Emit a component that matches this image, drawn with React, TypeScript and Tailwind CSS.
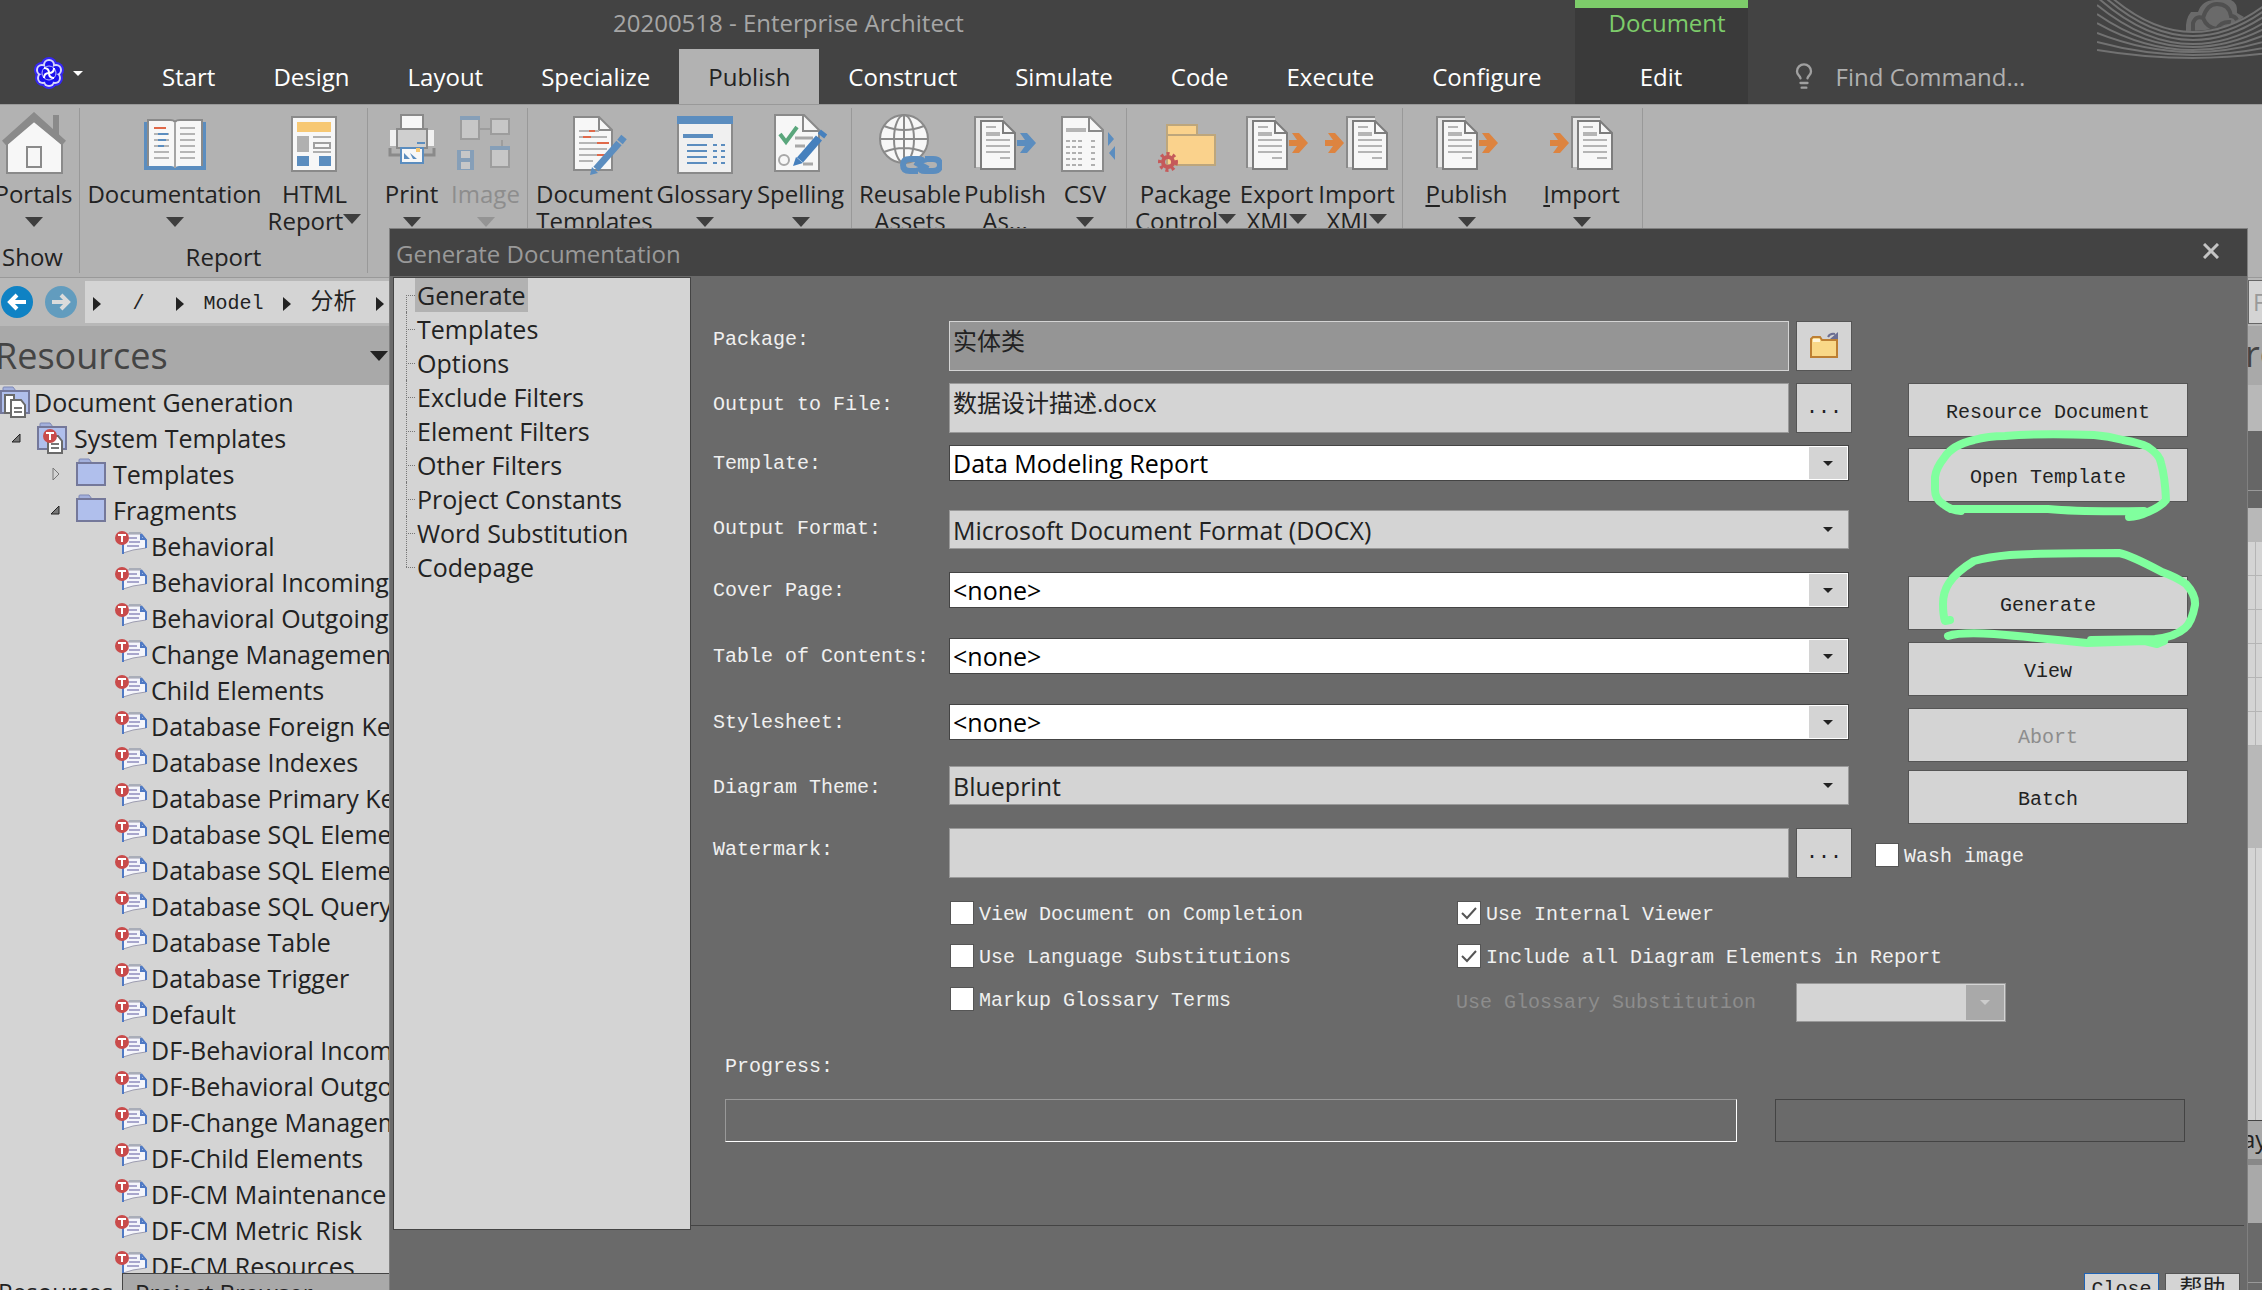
import type { FC, ReactNode } from "react";
import { Lightbulb } from "lucide-react";

const tabs = [
  "Start",
  "Design",
  "Layout",
  "Specialize",
  "Publish",
  "Construct",
  "Simulate",
  "Code",
  "Execute",
  "Configure",
];

const fragments = [
  "Behavioral",
  "Behavioral Incoming",
  "Behavioral Outgoing",
  "Change Management",
  "Child Elements",
  "Database Foreign Key",
  "Database Indexes",
  "Database Primary Key",
  "Database SQL Elements",
  "Database SQL Elements",
  "Database SQL Query",
  "Database Table",
  "Database Trigger",
  "Default",
  "DF-Behavioral Incoming",
  "DF-Behavioral Outgoing",
  "DF-Change Management",
  "DF-Child Elements",
  "DF-CM Maintenance",
  "DF-CM Metric Risk",
  "DF-CM Resources",
];

const pages = [
  "Generate",
  "Templates",
  "Options",
  "Exclude Filters",
  "Element Filters",
  "Other Filters",
  "Project Constants",
  "Word Substitution",
  "Codepage",
];

const Caret: FC<{ className?: string }> = ({ className = "" }) => (
  <svg
    viewBox="0 0 18 10"
    className={`h-[10px] w-[18px] shrink-0 fill-current ${className}`}
    aria-hidden
  >
    <path d="M0 0h18l-9 10z" />
  </svg>
);

/* ---------- ribbon icons, all on a 64x64 grid ---------- */

const Icon: FC<{ children: ReactNode; className?: string }> = ({
  children,
  className = "",
}) => (
  <svg viewBox="0 0 64 64" className={`h-16 w-16 ${className}`} fill="none" aria-hidden>
    {children}
  </svg>
);

const HouseIcon = () => (
  <Icon>
    <path d="M51 3h6v22l-6-6z" fill="#8a8a8a" />
    <path d="M5 32 32 9l28 23v29H5z" fill="#f7f7f7" stroke="#8a8a8a" strokeWidth="2" />
    <path d="M2 31 32 4l30 27" stroke="#8a8a8a" strokeWidth="6" />
    <path d="M25 35h14v20H25z" fill="#f7f7f7" stroke="#8a8a8a" strokeWidth="2" />
  </Icon>
);

const BookIcon = () => (
  <Icon>
    <path d="M1 10h62v48H1z" fill="#5b8dbf" />
    <path d="M5 8h22q4 0 5 3 1-3 5-3h22v46H36q-3 0-4 2-1-2-4-2H5z" fill="#f7f7f7" />
    <path d="M5 54V8h22q4 0 5 2 1-2 5-2h22v46" stroke="#8a8a8a" strokeWidth="2" />
    <path d="M32 10v46" stroke="#a5a5a5" strokeWidth="2" />
    <path
      d="M11 22h15M11 28h15M11 34h15M11 40h15M11 46h15M37 16h15M37 22h15M37 28h15M37 34h15M37 40h15M37 46h15"
      stroke="#b5b5b5"
      strokeWidth="2"
    />
    <path d="M11 16h12" stroke="#e0694a" strokeWidth="2" />
    <path d="M15 22h10M15 28h8M15 34h6" stroke="#5b8dbf" strokeWidth="2" />
  </Icon>
);

const HtmlIcon = () => (
  <Icon>
    <path d="M9 5h44v54H9z" fill="#f7f7f7" stroke="#8a8a8a" strokeWidth="2" />
    <path d="M14 10h34v10H14z" fill="#f7c873" />
    <path d="M14 24h12v16H14z" fill="#b0b0b0" />
    <path d="M30 25h18M30 40h18" stroke="#b0b0b0" strokeWidth="2" />
    <path d="M31 31h16v5H31z" stroke="#a0a0a0" strokeWidth="2" />
    <path d="M14 44h12v10H14zM36 44h12v10H36z" fill="#5b8dbf" />
  </Icon>
);

const PrinterIcon = () => (
  <Icon>
    <path d="M10 18h44v16H10z" fill="#f0f0f0" />
    <path d="M10 36v7h44v-7" stroke="#8a8a8a" strokeWidth="3" />
    <path d="M21 3h22v14H21z" fill="#f7f7f7" stroke="#8a8a8a" strokeWidth="2" />
    <path d="M17 17h30v19H17z" fill="#cfcfcf" stroke="#8a8a8a" strokeWidth="2" />
    <path d="M37 31h8" stroke="#5b8dbf" strokeWidth="2" />
    <path d="M21 36h22v15H21z" fill="#f7f7f7" stroke="#5b8dbf" strokeWidth="2" />
    <path d="M24 47v-6l6 6zM30 41l7 6h-4zM36 43l6 6" fill="#5b8dbf" />
    <path d="M36 36h4v4h-4z" fill="#f7c873" />
  </Icon>
);

const ImageIcon = () => (
  <Icon className="opacity-50">
    <path d="M26 17h10M48 28v8" stroke="#8a8a8a" strokeWidth="2" />
    <path d="M7 5h18v22H7zM37 7h18v15H37zM37 36h18v19H37z" fill="#dcdcdc" stroke="#8a8a8a" strokeWidth="2" />
    <path d="M6 4h20v4H6zM36 34h20v4H36zM3 38h17v20H3z" fill="#5b8dbf" />
    <path d="M7 39h9v7H7zM7 50h9v7H7z" fill="#dcdcdc" />
  </Icon>
);

const DocTemplateIcon = () => (
  <Icon>
    <path d="M11 5h25l13 13v40H11z" fill="#f7f7f7" stroke="#8a8a8a" strokeWidth="2" />
    <path d="M36 5v13h13" stroke="#8a8a8a" strokeWidth="2" />
    <path d="M16 19h20M16 25h28M16 31h28M16 37h28M16 43h28M16 49h14" stroke="#b5b5b5" strokeWidth="2" />
    <path d="M26 19h6M20 25h8M34 31h12M34 43h8" stroke="#e0694a" strokeWidth="2" />
    <path d="M56 31 33 57" stroke="#5b8dbf" strokeWidth="7" />
    <path d="m27 63 2-8 6 6z" fill="#5b8dbf" />
    <path d="m57 30 4-5" stroke="#5b8dbf" strokeWidth="7" />
  </Icon>
);

const GlossaryIcon = () => (
  <Icon>
    <path d="M5 5h54v56H5z" fill="#f0f0f0" stroke="#8a8a8a" strokeWidth="2" />
    <path d="M4 4h56v8H4z" fill="#5b8dbf" />
    <path d="M10 24h30" stroke="#5b8dbf" strokeWidth="4" />
    <path d="M14 33h20M14 39h20M14 45h20M14 51h20" stroke="#5b8dbf" strokeWidth="2" />
    <path d="M40 33h12M40 39h12M40 45h12M40 51h12" stroke="#5b8dbf" strokeWidth="2" strokeDasharray="4" />
  </Icon>
);

const SpellingIcon = () => (
  <Icon>
    <path d="M6 3h29l15 15v41H6z" fill="#f7f7f7" stroke="#8a8a8a" strokeWidth="2" />
    <path d="M34 3v16h16" stroke="#8a8a8a" strokeWidth="2" />
    <path d="m11 22 6 8 11-15" stroke="#5aa67c" strokeWidth="4" />
    <circle cx="15" cy="48" r="5" stroke="#a8a8a8" strokeWidth="2" />
    <path d="M26 26h18M26 34h10M34 52h10" stroke="#a8a8a8" strokeWidth="3" />
    <path d="M50 26 31 48" stroke="#4680bd" strokeWidth="8" />
    <path d="m24 54 3-9 7 6zM49 22l7 6" fill="#4680bd" />
    <path d="m52 24 3-4" stroke="#4680bd" strokeWidth="8" />
  </Icon>
);

const GlobeIcon = () => (
  <Icon>
    <circle cx="26" cy="27" r="24" fill="#f7f7f7" stroke="#8a8a8a" strokeWidth="2" />
    <ellipse cx="26" cy="27" rx="10" ry="24" stroke="#8a8a8a" strokeWidth="2" />
    <path d="M2 27h48M6 14q20 8 40 0M6 40q20-8 40 0M26 3v48" stroke="#8a8a8a" strokeWidth="2" />
    <path
      d="M40 59h-8q-7 0-7-6t7-6h8q5 0 6 4M47 47h8q7 0 7 6t-7 6h-8q-5 0-6-4M37 50l13 7"
      stroke="#5b8dbf"
      strokeWidth="6"
    />
  </Icon>
);

const Pages: FC<{ x: number }> = ({ x }) => (
  <g transform={`translate(${x} 0)`}>
    <path d="M1 5h28v50H1z" fill="#e6e6e6" />
    <path d="M1 56V5h28" stroke="#8a8a8a" strokeWidth="2" />
    <path d="M7 9h22l12 12v36H7z" fill="#f7f7f7" stroke="#7d7d7d" strokeWidth="2" />
    <path d="M29 9v12h12" stroke="#7d7d7d" strokeWidth="2" />
    <path d="M12 15h10M12 28h24M12 34h24M12 40h24M26 46h10" stroke="#b5b5b5" strokeWidth="2" />
    <path d="M12 22h14" stroke="#b5b5b5" strokeWidth="4" />
  </g>
);

const ArrowMark: FC<{ x: number; color: string }> = ({ x, color }) => (
  <path
    transform={`translate(${x} 0)`}
    d="M0 28h8l-5-7h7l9 10-9 10H3l5-7H0z"
    fill={color}
  />
);

const PublishAsIcon = () => (
  <Icon>
    <Pages x={1} />
    <ArrowMark x={44} color="#5b8dbf" />
  </Icon>
);

const PagesOutIcon = () => (
  <Icon>
    <Pages x={1} />
    <ArrowMark x={44} color="#dd8440" />
  </Icon>
);

const PagesInIcon = () => (
  <Icon>
    <ArrowMark x={0} color="#dd8440" />
    <Pages x={21} />
  </Icon>
);

const CsvIcon = () => (
  <Icon>
    <path d="M9 5h28l13 13v41H9z" fill="#f7f7f7" stroke="#8a8a8a" strokeWidth="2" />
    <path d="M36 5v14h14" stroke="#8a8a8a" strokeWidth="2" />
    <path d="M13 18h20" stroke="#b5b5b5" strokeWidth="4" />
    <path
      d="M13 29h16M13 35h16M13 41h16M13 47h16M13 53h16M38 29h6M38 35h6M38 41h6M38 47h6M38 53h6"
      stroke="#b0b0b0"
      strokeWidth="2"
      strokeDasharray="4 2"
    />
    <path d="m55 20 6 7-6 7zM62 34l-6 7 6 7z" fill="#5b8dbf" />
  </Icon>
);

const PackageIcon = () => (
  <Icon>
    <path d="M13 13h30v10H13zM13 23h48v30H13z" fill="#fad28c" stroke="#bda67c" strokeWidth="2" />
    <circle cx="14" cy="50" r="5" stroke="#c55a5a" strokeWidth="4" />
    <circle cx="14" cy="50" r="8" stroke="#c55a5a" strokeWidth="4" strokeDasharray="3 3" />
  </Icon>
);

/* ---------- ribbon ---------- */

type RibbonItemProps = {
  icon: ReactNode;
  label: ReactNode;
  second?: string;
  caret?: boolean;
  className: string;
};

const RibbonItem: FC<RibbonItemProps> = ({ icon, label, second, caret, className }) => (
  <button className={`flex shrink-0 flex-col items-center whitespace-nowrap pt-[7px] ${className}`}>
    {icon}
    <span className="mt-1 leading-[28px]">{label}</span>
    <span className="flex h-[26px] items-center leading-[26px]">
      {second}
      {caret && <Caret className={second ? "-mt-1 opacity-80" : "mt-0.5 opacity-80"} />}
    </span>
  </button>
);

const RibbonGroup: FC<{ children: ReactNode; title?: string; className: string }> = ({
  children,
  title,
  className,
}) => (
  <div
    className={`mb-1 mt-[3px] flex shrink-0 flex-col justify-between border-r border-[#999] ${className}`}
  >
    <div className="-mt-[3px] flex justify-center pl-[2px]">{children}</div>
    <div className="pb-0.5 text-center leading-[28px]">{title}</div>
  </div>
);

const Ribbon = () => (
  <div className="flex h-[174px] shrink-0 border-y border-[#999] bg-[#b2b2b2] text-[24px] text-[#222]">
    <RibbonGroup className="w-[80px] pr-[14px]" title="Show">
      <RibbonItem className="w-[80px]" icon={<HouseIcon />} label="Portals" caret />
    </RibbonGroup>
    <RibbonGroup className="w-[288px]" title="Report">
      <RibbonItem className="w-[188px]" icon={<BookIcon />} label="Documentation" caret />
      <RibbonItem className="w-[100px] pr-2" icon={<HtmlIcon />} label="HTML" second="Report" caret />
    </RibbonGroup>
    <RibbonGroup className="w-[160px]">
      <RibbonItem className="w-[74px]" icon={<PrinterIcon />} label="Print" caret />
      <RibbonItem className="w-[74px] text-[#8d8d8d]" icon={<ImageIcon />} label="Image" caret />
    </RibbonGroup>
    <RibbonGroup className="w-[324px]">
      <RibbonItem className="w-[126px]" icon={<DocTemplateIcon />} label="Document" second="Templates" />
      <RibbonItem className="w-[94px]" icon={<GlossaryIcon />} label="Glossary" caret />
      <RibbonItem className="w-[98px]" icon={<SpellingIcon />} label="Spelling" caret />
    </RibbonGroup>
    <RibbonGroup className="w-[275px]">
      <RibbonItem className="w-[108px]" icon={<GlobeIcon />} label="Reusable" second="Assets" />
      <RibbonItem className="w-[82px]" icon={<PublishAsIcon />} label="Publish" second="As..." />
      <RibbonItem className="w-[78px]" icon={<CsvIcon />} label="CSV" caret />
    </RibbonGroup>
    <RibbonGroup className="w-[276px]">
      <RibbonItem className="w-[102px]" icon={<PackageIcon />} label="Package" second="Control" caret />
      <RibbonItem className="w-[80px]" icon={<PagesOutIcon />} label="Export" second="XMI" caret />
      <RibbonItem className="w-[80px]" icon={<PagesInIcon />} label="Import" second="XMI" caret />
    </RibbonGroup>
    <RibbonGroup className="w-[240px]">
      <RibbonItem
        className="w-[116px]"
        icon={<PagesOutIcon />}
        label={<><u className="underline-offset-2">P</u>ublish</>}
        caret
      />
      <RibbonItem
        className="w-[114px]"
        icon={<PagesInIcon />}
        label={<><u className="underline-offset-2">I</u>mport</>}
        caret
      />
    </RibbonGroup>
  </div>
);

/* [height at the left edge, lowest point] of each line of the header ornament */
const arcs = [
  [-16, 32],
  [-10, 36],
  [-3, 40],
  [5, 44],
  [14, 47],
  [23, 50],
  [33, 52],
  [42, 55],
  [50, 58],
];

const petals = [
  [16, 8],
  [9, 13],
  [23, 13],
  [10, 21],
  [22, 21],
  [16, 24],
];

const TitleBar = () => (
  <header className="relative flex h-[104px] shrink-0 bg-[#434343] text-[24px]">
    <div className="flex min-w-0 flex-col">
      <h1 className="h-[49px] pl-[613px] leading-[46px] text-[#a6a6a6]">
        20200518 - Enterprise Architect
      </h1>
      <nav className="flex h-[55px] pr-1 text-white">
        <button className="flex w-[133px] items-center gap-2 pb-[7px] pl-[33px]" aria-label="Application menu">
          <svg viewBox="0 0 32 32" className="h-8 w-8" aria-hidden>
            {petals.map(([x, y]) => (
              <circle key={`${x}-${y}`} cx={x} cy={y} r="8" fill="#3526f5" />
            ))}
            {petals.map(([x, y]) => (
              <circle key={`${x}-${y}`} cx={x} cy={y} r="6" fill="#d5d5fa" />
            ))}
            {petals.map(([x, y]) => (
              <circle key={`${x}-${y}`} cx={x} cy={y} r="4" fill="#1a10ee" />
            ))}
            <circle cx="16" cy="16" r="7" fill="#1a10ee" stroke="#b9b9f8" strokeWidth="1" />
            <path d="M11 11q5 0 5 5t5 5M21 11q0 5-5 5t-5 5" stroke="#fff" strokeWidth="2" fill="none" />
          </svg>
          <svg viewBox="0 0 10 5" className="h-[5px] w-[10px] fill-white" aria-hidden>
            <path d="M0 0h10L5 5z" />
          </svg>
        </button>
        {tabs.map((tab) => (
          <button
            key={tab}
            className={
              tab === "Publish"
                ? "bg-[#b2b2b2] px-[29px] text-[#222]"
                : "px-[29px]"
            }
          >
            {tab}
          </button>
        ))}
      </nav>
    </div>
    <div className="flex w-[173px] shrink-0 flex-col border-t-8 border-[#7dcc6a] bg-[#3a3a3a] text-center">
      <span className="h-[41px] pl-3 leading-[30px] text-[#7dcc6a]">Document</span>
      <button className="h-[55px] text-white">Edit</button>
    </div>
    <label className="flex items-center self-end pl-[42px] text-[#b0b0b0]">
      <Lightbulb className="mb-px h-7 w-7 text-[#a0a0a0]" strokeWidth={2} />
      <input
        className="h-[55px] w-[240px] bg-transparent pl-[18px] outline-none placeholder:text-[#b0b0b0]"
        placeholder="Find Command..."
        aria-label="Find Command"
      />
    </label>
    <svg
      viewBox="2097 0 165 60"
      className="absolute right-0 top-0 h-[60px] w-[165px]"
      fill="none"
      stroke="#727272"
      strokeWidth="2"
      aria-hidden
    >
      <path
        d="M2186 31q-1-12 5-19h7q4-12 17-12h16q7 3 6 13l7 4q-20 14-58 14z"
        fill="#6a6a6a"
        stroke="none"
      />
      <path
        d="M2193 31v-8q3-8 10-5 4-14 14-14 12 0 14 12 4 0 6 4M2203 18q4 10 14 11 4-8 14-7"
        stroke="#505050"
        strokeWidth="4"
      />
      {arcs.map(([edge, low]) => (
        <path key={low} d={`M2097 ${edge}Q2193 ${2 * low - edge} 2289 ${edge}`} />
      ))}
    </svg>
  </header>
);

/* ---------- resources panel ---------- */

const Folder: FC<{ children?: ReactNode }> = ({ children }) => (
  <svg viewBox="0 0 30 32" className="h-8 w-[30px] shrink-0" fill="none" aria-hidden>
    <path d="M3 5V2q0-1 1-1h9l3 4z" fill="#a3b0dc" stroke="#7f88b5" strokeWidth="1" />
    <path d="M1 5h28v22H1z" fill="#b0bfec" stroke="#74789a" strokeWidth="2" />
    {children}
  </svg>
);

const SmallPage = () => (
  <>
    <path d="M11 14h10l4 5v12H11z" fill="#fff" stroke="#6a6a6a" strokeWidth="2" />
    <path d="M14 22h8M14 26h8" stroke="#777" strokeWidth="2" />
  </>
);

const TemplateBadge: FC<{ cx: number; cy: number }> = ({ cx, cy }) => (
  <g transform={`translate(${cx} ${cy})`}>
    <circle r="7" fill="#c94b4b" />
    <path d="M-4-3h8M0-3v7" stroke="#fff" strokeWidth="2" />
  </g>
);

const FragmentIcon = () => (
  <svg viewBox="0 0 32 24" className="mt-0.5 h-6 w-8 shrink-0 self-start" fill="none" aria-hidden>
    <path d="M8 3h18l5 5v9l-13 2-10 3z" fill="#f4f5fb" stroke="#9c9cb0" strokeWidth="1" />
    <path d="M8 12v11M26 3l5 6v8" stroke="#4f79c4" strokeWidth="2" />
    <path d="M14 2h12" stroke="#a9adb8" strokeWidth="2" />
    <path d="M26 3v5h5" stroke="#4f79c4" strokeWidth="2" />
    <path d="M14 7h8M14 11h11M12 15h12" stroke="#a8a6cc" strokeWidth="2" />
    <TemplateBadge cx={7} cy={7} />
  </svg>
);

const Expanded = () => (
  <svg viewBox="0 0 10 10" className="h-[10px] w-[10px] shrink-0" aria-hidden>
    <path d="M9 1v8H1z" fill="#777" stroke="#222" />
  </svg>
);

const Collapsed = () => (
  <svg viewBox="0 0 10 14" className="h-[14px] w-[10px] shrink-0" aria-hidden>
    <path d="M2 1v12l6-6z" fill="none" stroke="#777" />
  </svg>
);

const Chevron = () => (
  <svg viewBox="0 0 8 14" className="h-[14px] w-2 shrink-0 fill-[#222]" aria-hidden>
    <path d="M0 0v14l8-7z" />
  </svg>
);

const NavArrow: FC<{ label: string; className: string; d: string }> = ({ label, className, d }) => (
  <button aria-label={label} className="shrink-0">
    <svg viewBox="0 0 32 32" className={`h-8 w-8 ${className}`} aria-hidden>
      <circle cx="16" cy="16" r="16" />
      <path d={d} fill="none" stroke="#fff" strokeWidth="4" />
    </svg>
  </button>
);

const ResourcesPanel = () => (
  <aside className="flex w-[390px] shrink-0 flex-col overflow-hidden whitespace-nowrap">
    <div className="flex h-[48px] shrink-0 items-center gap-3 bg-[#b8b8b8] pl-px">
      <NavArrow label="Back" className="fill-[#0f82c4]" d="M25 16H9m7-7-7 7 7 7" />
      <NavArrow label="Forward" className="fill-[#0f82c4] opacity-50" d="M7 16h16m-7-7 7 7-7 7" />
      <div className="-ml-1 flex h-[42px] min-w-0 flex-1 items-center justify-between bg-[#d4d4d4] pl-2 pr-[6px] pt-[3px] font-['Liberation_Mono','Noto_Sans_CJK_SC',monospace] text-[20px] text-[#222]">
        <Chevron />
        <span className="px-3">/</span>
        <Chevron />
        <span>Model</span>
        <Chevron />
        <span className="text-[23px]">分析</span>
        <Chevron />
      </div>
    </div>
    <div className="flex h-[59px] shrink-0 items-center justify-between bg-[#a9a9a9] pr-[2px] text-[#444]">
      <h2 className="-ml-[5px] text-[36px]">Resources</h2>
      <Caret className="text-[#222]" />
    </div>
    <ul className="min-h-0 flex-1 overflow-hidden bg-[#d4d4d4] text-[25px] leading-[34px] text-[#222]">
      <li className="flex h-9 items-center gap-1 pb-0.5">
        <Folder>
          <path d="M5 9h9v18H5z" fill="#fff" stroke="#6a6a6a" strokeWidth="2" />
          <SmallPage />
        </Folder>
        Document Generation
      </li>
      <li className="flex h-9 items-center pb-0.5 pl-[11px]">
        <Expanded />
        <span className="ml-4 mr-[7px]">
          <Folder>
            <SmallPage />
            <TemplateBadge cx={13} cy={14} />
          </Folder>
        </span>
        System Templates
      </li>
      <li className="flex h-9 items-center gap-[7px] pb-0.5 pl-[51px]">
        <Collapsed />
        <span className="ml-2"><Folder /></span>
        Templates
      </li>
      <li className="flex h-9 items-center gap-[7px] pb-0.5 pl-[50px]">
        <Expanded />
        <span className="ml-[9px]"><Folder /></span>
        Fragments
      </li>
      {fragments.map((name, i) => (
        <li key={i} className="flex h-9 items-center gap-1 pb-0.5 pl-[115px]">
          <FragmentIcon />
          {name}
        </li>
      ))}
    </ul>
    <div className="flex h-[17px] shrink-0 overflow-hidden bg-[#d4d4d4] text-[24px] leading-[38px] text-[#222]">
      <button className="-ml-[2px] h-[38px] w-[124px] shrink-0 text-left">Resources</button>
      <button className="h-[38px] flex-1 border-l border-t border-[#444] bg-[#a9a9a9] pl-3 text-left leading-[36px]">
        Project Browser
      </button>
    </div>
  </aside>
);

const gridRows = "bg-[#d4d4d4] bg-[repeating-linear-gradient(to_bottom,transparent_0_33px,#b5b5b5_33px_34px)]";

/* Only the left edge of this panel stays free beside the dialog. */
const RightPanel = () => (
  <aside className="flex w-[14px] shrink-0 flex-col overflow-hidden text-[#444]">
    <div className="flex h-[48px] items-center bg-[#b8b8b8]">
      <span className="h-[44px] w-5 shrink-0 border border-[#666] bg-[#d4d4d4] pl-1 text-[24px] leading-[42px] text-[#999]">
        F
      </span>
    </div>
    <div className="flex h-[59px] bg-[#a9a9a9] text-[36px] leading-[56px]">
      <span className="-ml-[3px]">ro</span>
    </div>
    <div className="h-[46px] bg-[#b8b8b8]" />
    <div className="h-[60px] border-b border-[#999] bg-[#666]" />
    <div className="h-[17px] bg-[#666]" />
    <div className="h-[34px] bg-[#b8b8b8]" />
    <div className={`h-[204px] ${gridRows}`}>
      <div className="ml-[7px] h-full w-px bg-[#b5b5b5]" />
    </div>
    <div className="h-[102px] bg-[#b8b8b8]" />
    <div className="h-[272px] bg-[#d4d4d4]">
      <div className="ml-[7px] h-full w-px bg-[#b5b5b5]" />
    </div>
    <div className="flex h-[39px] border-t border-[#444] bg-[#a9a9a9] text-[24px] leading-[36px] text-[#222]">
      <span className="-ml-[6px]">ay</span>
    </div>
    <div className="h-[6px] bg-[#888]" />
    <div className="h-[58px] bg-[#a9a9a9]" />
    <div className="h-[60px] border-b border-[#999] bg-[#6a6a6a]" />
    <div className="flex-1 bg-[#6a6a6a]" />
  </aside>
);

/* ---------- dialog ---------- */

const Row: FC<{ id: string; label: string; className: string; low?: boolean; children: ReactNode }> = ({
  id,
  label,
  className,
  low,
  children,
}) => (
  <div className={`flex items-start ${className}`}>
    <label
      htmlFor={id}
      className={`w-[236px] shrink-0 leading-6 ${low ? "pt-[10px]" : "pt-[7px]"}`}
    >
      {label}
    </label>
    {children}
  </div>
);

const fieldFont = "font-['Open_Sans','Noto_Sans_CJK_SC',sans-serif]";

const Combo: FC<{ id: string; value: string; white?: boolean }> = ({ id, value, white }) => (
  <div className="relative mr-[3px] min-w-0 flex-1">
    <select
      id={id}
      className={`block w-full appearance-none border pl-[3px] text-[25px] leading-[34px] outline-none ${fieldFont} ${
        white
          ? "h-9 border-[#444] bg-white text-black"
          : "h-[39px] border-[#999] bg-[#d4d4d4] text-[#222]"
      }`}
    >
      <option>{value}</option>
    </select>
    <span
      className={`pointer-events-none absolute inset-y-0.5 right-0.5 flex w-[38px] items-center justify-center text-[#222] ${
        white ? "bg-[#d4d4d4]" : ""
      }`}
    >
      <svg viewBox="0 0 10 5" className="h-[5px] w-[10px] fill-current" aria-hidden>
        <path d="M0 0h10L5 5z" />
      </svg>
    </span>
  </div>
);

const Check: FC<{ label: string; checked?: boolean }> = ({ label, checked }) => (
  <label className="flex items-center gap-[5px] pl-px leading-6">
    <span className="relative flex h-6 w-6">
      <input
        type="checkbox"
        defaultChecked={checked}
        className="peer h-6 w-6 appearance-none border border-[#555] bg-white"
      />
      <svg
        viewBox="0 0 24 24"
        className="pointer-events-none absolute inset-0 hidden h-6 w-6 peer-checked:block"
        fill="none"
        stroke="#555"
        strokeWidth="2"
        aria-hidden
      >
        <path d="m5 12 5 5 9-10" />
      </svg>
    </span>
    <span className="pt-1">{label}</span>
  </label>
);

const SideButton: FC<{ label: string; className?: string; disabled?: boolean }> = ({
  label,
  className = "",
  disabled,
}) => (
  <button
    disabled={disabled}
    className={`h-[54px] w-[280px] border border-[#555] bg-[#d4d4d4] pt-[6px] text-[#222] disabled:text-[#8d8d8d] ${className}`}
  >
    {label}
  </button>
);

const inputClass = `h-[50px] min-w-0 flex-1 border pb-[14px] pl-[3px] text-[24px] outline-none ${fieldFont}`;
const pickClass =
  "ml-[7px] flex h-[50px] w-[56px] shrink-0 items-center justify-center border border-[#555] bg-[#d4d4d4] text-[#222]";

/* Hand drawn marks round the two buttons to press. */
const Marks = () => (
  <svg
    viewBox="1920 420 300 240"
    className="pointer-events-none absolute left-[46px] top-[37px] h-[240px] w-[300px]"
    fill="none"
    stroke="#80ff9e"
    strokeWidth="8"
    strokeLinecap="round"
    strokeLinejoin="round"
    aria-hidden
  >
    <path d="M1961 511Q1950 510 1943 504 1935 499 1935 490V477Q1936 468 1944 458 1952 445 1974 440 1988 436 2005 436 2040 433 2094 435 2108 436 2123 440 2140 443 2148 447 2160 455 2161 463 2165 477 2166 500 2162 506 2148 512 2138 517 2129 517" />
    <path d="M1951 509H2048Q2080 512 2144 511" />
    <path d="M1950 620 1945 621Q1943 615 1943 604 1943 592 1949 583 1956 572 1974 561 1988 557 2010 555 2040 553 2119 553 2130 555 2162 572 2176 577 2186 584 2196 595 2195 605 2192 622 2185 628 2175 637 2155 639L2091 640" />
    <path d="M1948 636Q1960 632 1994 634 2030 637 2087 643L2145 641 2157 644 2164 641" />
  </svg>
);

const GenerateDialog = () => (
  <section
    role="dialog"
    aria-label="Generate Documentation"
    className="absolute bottom-0 left-[389px] right-[14px] top-[228px] flex flex-col overflow-hidden border-x border-t border-[#808080] bg-[#6a6a6a]"
  >
    <div className="flex h-[47px] shrink-0 items-center justify-between bg-[#434343] pl-[6px] pr-7 text-[24px] text-[#999]">
      <span className="pt-0.5">Generate Documentation</span>
      <button aria-label="Close dialog" className="pb-1">
        <svg viewBox="0 0 16 16" className="h-4 w-4" stroke="#c4c4c4" strokeWidth="3" aria-hidden>
          <path d="m1 1 14 14M15 1 1 15" />
        </svg>
      </button>
    </div>
    <div className="flex min-h-0 flex-1">
      <nav className="ml-[3px] mt-px h-[953px] w-[298px] shrink-0 border border-[#444] bg-[#d4d4d4] text-[25px] text-[#222]">
        <ul className="ml-3">
          {pages.map((page, i) => (
            <li key={page} className="relative flex h-[34px] items-center">
              <span
                className={`absolute left-0 w-px border-l border-dotted border-[#777] ${
                  i === 0 ? "bottom-0 h-[17px]" : i === pages.length - 1 ? "top-0 h-[17px]" : "h-full"
                }`}
              />
              <span className="w-[9px] border-t border-dotted border-[#777]" />
              <a
                href="#"
                className={`px-[2px] leading-[34px] ${page === "Generate" ? "bg-[#b2b2b2]" : ""}`}
              >
                {page}
              </a>
            </li>
          ))}
        </ul>
      </nav>
      <div className="flex min-w-0 flex-1 flex-col font-['Liberation_Mono','Noto_Sans_CJK_SC',monospace] text-[20px] text-[#f0f0f0]">
        <form className="flex flex-1 flex-col pl-[22px] pt-[45px]">
          <div className="flex pr-[59px]">
            <div className="min-w-0 flex-1">
              <Row id="package" label="Package:" className="h-[62px]">
                <input
                  id="package"
                  readOnly
                  defaultValue="实体类"
                  className={`border-[#d4d4d4] bg-[#959595] text-[#222] ${inputClass}`}
                />
                <button type="button" className={pickClass} aria-label="Select package">
                  <svg viewBox="0 0 30 30" className="h-[30px] w-[30px]" fill="none" aria-hidden>
                    <path d="M2 26V8l2-2h7l2 3h15v17z" fill="#f9d888" stroke="#bd7f33" strokeWidth="2" />
                    <path d="M4 8h7v3H4z" fill="#fff6dc" />
                    <path d="M19 6q2-4 7-3" stroke="#6b6e92" strokeWidth="2" />
                    <path d="m29 1v7h-8z" fill="#6b6e92" />
                  </svg>
                </button>
              </Row>
              <Row id="output" label="Output to File:" className="h-[62px]" low>
                <input
                  id="output"
                  defaultValue="数据设计描述.docx"
                  className={`border-[#999] bg-[#d4d4d4] text-[#222] ${inputClass}`}
                />
                <button type="button" className={pickClass} aria-label="Browse output file">
                  ...
                </button>
              </Row>
              <Row id="template" label="Template:" className="h-[65px]">
                <Combo id="template" value="Data Modeling Report" white />
              </Row>
              <Row id="format" label="Output Format:" className="h-[62px]">
                <Combo id="format" value="Microsoft Document Format (DOCX)" />
              </Row>
              <Row id="cover" label="Cover Page:" className="h-[66px]">
                <Combo id="cover" value="<none>" white />
              </Row>
              <Row id="toc" label="Table of Contents:" className="h-[66px]">
                <Combo id="toc" value="<none>" white />
              </Row>
              <Row id="stylesheet" label="Stylesheet:" className="h-[62px]">
                <Combo id="stylesheet" value="<none>" white />
              </Row>
              <Row id="theme" label="Diagram Theme:" className="h-[62px]" low>
                <Combo id="theme" value="Blueprint" />
              </Row>
              <Row id="watermark" label="Watermark:" className="h-[50px]" low>
                <input id="watermark" className={`border-[#999] bg-[#d4d4d4] text-[#222] ${inputClass}`} />
                <button type="button" className={pickClass} aria-label="Browse watermark">
                  ...
                </button>
              </Row>
            </div>
            <div className="relative ml-[22px] mt-[62px] flex w-[314px] shrink-0 flex-col">
              <SideButton label="Resource Document" className="self-end" />
              <SideButton label="Open Template" className="mt-[11px] self-end" />
              <SideButton label="Generate" className="mt-[74px] self-end" />
              <SideButton label="View" className="mt-3 self-end" />
              <SideButton label="Abort" className="mt-3 self-end" disabled />
              <SideButton label="Batch" className="mt-2 self-end" />
              <div className="mt-[17px]">
                <Check label="Wash image" />
              </div>
              <Marks />
            </div>
          </div>

          <div className="ml-[236px] mt-[21px] flex">
            <div className="flex w-[507px] flex-col gap-[15px]">
              <Check label="View Document on Completion" />
              <Check label="Use Language Substitutions" />
              <Check label="Markup Glossary Terms" />
            </div>
            <div className="flex flex-col gap-[15px]">
              <Check label="Use Internal Viewer" checked />
              <Check label="Include all Diagram Elements in Report" checked />
              <div className="-mt-0.5 flex items-center text-[#8d8d8d]">
                <label htmlFor="substitution" className="w-[340px] leading-6">
                  Use Glossary Substitution
                </label>
                <div className="relative">
                  <select
                    id="substitution"
                    disabled
                    className="block h-[39px] w-[210px] appearance-none border border-[#999] bg-[#d4d4d4]"
                  />
                  <span className="pointer-events-none absolute inset-y-0.5 right-0.5 flex w-[38px] items-center justify-center bg-[#a9a9a9] text-[#ccc]">
                    <svg viewBox="0 0 10 5" className="h-[5px] w-[10px] fill-current" aria-hidden>
                      <path d="M0 0h10L5 5z" />
                    </svg>
                  </span>
                </div>
              </div>
            </div>
          </div>

          <div className="mt-[33px] pl-3 pr-[62px]">
            <div className="leading-6">Progress:</div>
            <div className="mt-5 flex gap-[38px]">
              <div
                role="progressbar"
                aria-label="Progress"
                className="h-[43px] flex-1 border border-b-white border-l-[#999] border-r-white border-t-[#999]"
              />
              <div className="h-[43px] w-[410px] border border-[#444]" />
            </div>
          </div>
        </form>
        <footer className="mr-[3px] flex h-[65px] shrink-0 justify-end gap-[6px] overflow-hidden border-t border-[#444] pr-1 pt-[47px]">
          <button className="h-[34px] w-[75px] shrink-0 border border-[#1f63b5] bg-[#d4d4d4] text-[#222]">
            Close
          </button>
          <button className="h-[34px] w-[75px] shrink-0 border border-[#555] bg-[#d4d4d4] text-[23px] leading-[30px] text-[#222]">
            帮助
          </button>
        </footer>
      </div>
    </div>
  </section>
);

const App = () => (
  <div className="relative flex h-screen flex-col overflow-hidden bg-[#6a6a6a] font-['Open_Sans','Noto_Sans_CJK_SC',sans-serif]">
    <TitleBar />
    <Ribbon />
    <main className="flex min-h-0 flex-1 justify-between">
      <ResourcesPanel />
      <RightPanel />
    </main>
    <GenerateDialog />
  </div>
);

export default App;
